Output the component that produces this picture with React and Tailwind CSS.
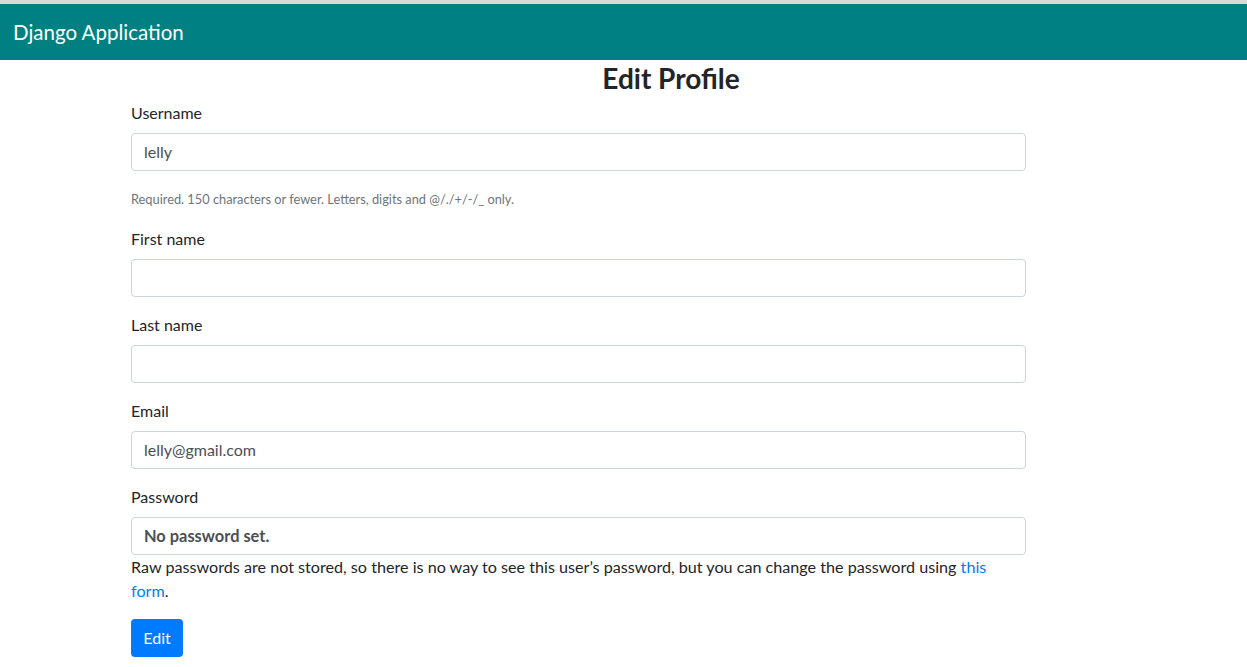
import React from 'react';

const Field = ({ label, value, children }) => (
  <div className="mb-4">
    <label className="block text-base leading-6 text-[#212529] mb-2">{label}</label>
    <div className="w-[895px] h-[38px] border border-[#ced4da] rounded-[4px] px-3 flex items-center text-base text-[#495057]">
      {value}
    </div>
    {children}
  </div>
);

const App = () => {
  return (
    <div className="min-h-screen bg-white" style={{ fontFamily: 'Lato, "Noto Sans", sans-serif' }}>
      <div className="h-1 bg-[#d9d9d9]" />
      <nav className="h-14 bg-[#008080] flex items-center px-[13px]">
        <span className="text-white text-[20.5px]">Django Application</span>
      </nav>

      <div className="pl-[131px]">
        <div className="w-[1080px] text-center">
          <h2 className="text-[28px] leading-[34px] font-bold text-[#212529] mb-[6px] mt-[1px]">Edit Profile</h2>
        </div>

        <div className="mb-[18px]">
          <label className="block text-base leading-6 text-[#212529] mb-2">Username</label>
          <div className="w-[895px] h-[38px] border border-[#ced4da] rounded-[4px] px-3 flex items-center text-base text-[#495057]">
            lelly
          </div>
          <p className="mt-[19px] text-[12.8px] leading-[19px] text-[#6c757d]">
            Required. 150 characters or fewer. Letters, digits and @/./+/-/_ only.
          </p>
        </div>

        <Field label="First name" value="" />
        <Field label="Last name" value="" />
        <Field label="Email" value="lelly@gmail.com" />

        <div className="mb-4">
          <label className="block text-base leading-6 text-[#212529] mb-2">Password</label>
          <div className="w-[895px] h-[38px] border border-[#ced4da] rounded-[4px] px-3 flex items-center text-[16.4px] font-bold text-[#495057]">
            No password set.
          </div>
          <p className="w-[880px] text-[16.15px] leading-6 text-[#212529]">
            Raw passwords are not stored, so there is no way to see this user’s password, but you can change the password using{' '}
            <a href="#" className="text-[#007bff]">this</a>
            <br />
            <a href="#" className="text-[#007bff]">form</a>.
          </p>
        </div>

        <button className="h-[38px] w-[52px] rounded-[4px] bg-[#007bff] text-white text-base">Edit</button>
      </div>
    </div>
  );
};

export default App;
